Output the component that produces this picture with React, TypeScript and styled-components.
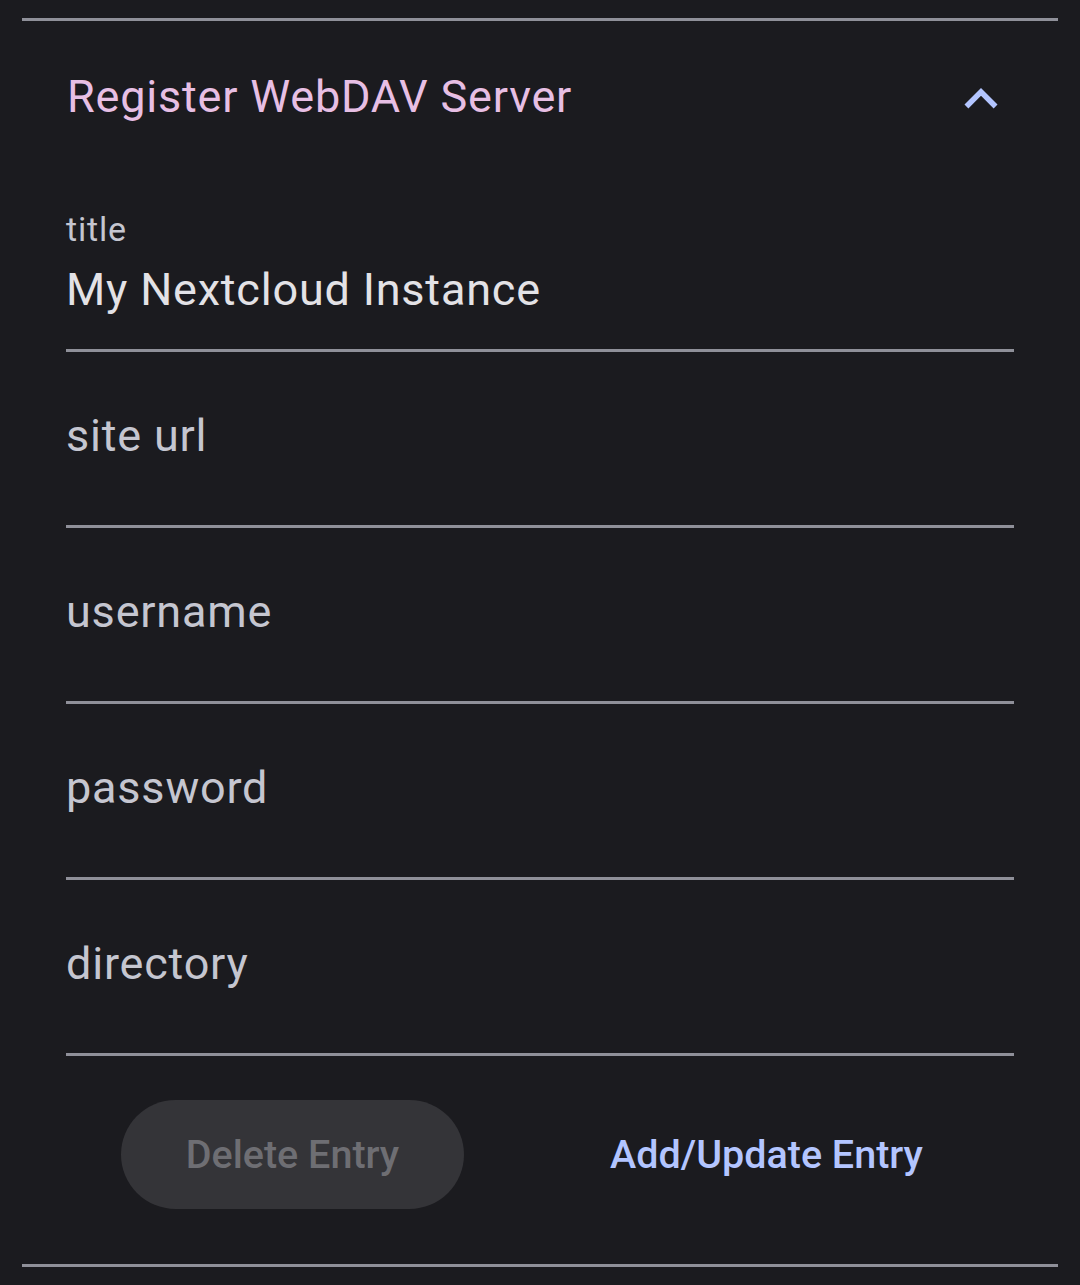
import React from "react";
import styled, { createGlobalStyle } from "styled-components";

const Global = createGlobalStyle`
  html, body {
    margin: 0;
    padding: 0;
    background: #1b1b1f;
  }
  body {
    font-family: Roboto, "Noto Sans", "Liberation Sans", sans-serif;
    -webkit-font-smoothing: antialiased;
  }
`;

const Page = styled.div`
  width: 1080px;
  min-height: 1285px;
  background: #1b1b1f;
  padding: 18px 22px 0;
  box-sizing: border-box;
`;

const Divider = styled.div`
  height: 3px;
  background: #8f9099;
`;

const Header = styled.div`
  height: 155px;
  display: flex;
  align-items: center;
  justify-content: space-between;
  padding: 0 44px 0 45px;
`;

const HeaderTitle = styled.div`
  font-size: 45px;
  font-weight: 400;
  letter-spacing: 0.8px;
  color: #e7bfe4;
  margin-top: -4px;
`;

const Chevron = styled.svg`
  width: 66px;
  height: 66px;
  display: block;
  fill: #b3c5ff;
`;

const Form = styled.div`
  padding: 0 44px;
  display: flex;
  flex-direction: column;
`;

const Field = styled.div`
  height: 173px;
  border-bottom: 3px solid #8f9099;
  display: flex;
  flex-direction: column;
  justify-content: center;
`;

const FieldLabel = styled.div`
  font-size: 34px;
  line-height: 40px;
  letter-spacing: 0.8px;
  color: #c5c6d0;
  margin-top: 1px;
`;

const FieldValue = styled.div`
  font-size: 45px;
  line-height: 54px;
  letter-spacing: 0.8px;
  color: #e3e2e6;
  margin-top: 14px;
`;

const Placeholder = styled.div`
  font-size: 45px;
  line-height: 54px;
  letter-spacing: 0.8px;
  color: #c5c6d0;
  margin-top: -5px;
`;

const ButtonRow = styled.div`
  display: flex;
  justify-content: space-around;
  align-items: center;
  padding: 44px 0 55px;
`;

const FilledButton = styled.button`
  width: 343px;
  height: 109px;
  border: none;
  border-radius: 55px;
  background: #343438;
  color: #6e6e73;
  font-family: Roboto, "Noto Sans", sans-serif;
  font-size: 39.5px;
  font-weight: 500;
  letter-spacing: 0px;
  padding: 0;
`;

const TextButton = styled.button`
  height: 109px;
  border: none;
  background: transparent;
  color: #b3c5ff;
  font-family: Roboto, "Noto Sans", sans-serif;
  font-size: 39.5px;
  font-weight: 500;
  letter-spacing: 0px;
  padding: 0 36px;
`;

const fields = ["site url", "username", "password", "directory"];

export default function App() {
  return (
    <Page>
      <Global />
      <Divider />
      <Header>
        <HeaderTitle>Register WebDAV Server</HeaderTitle>
        <Chevron viewBox="0 0 24 24">
          <path d="M12 8l-6 6 1.41 1.41L12 10.83l4.59 4.58L18 14z" />
        </Chevron>
      </Header>
      <Form>
        <Field>
          <FieldLabel>title</FieldLabel>
          <FieldValue>My Nextcloud Instance</FieldValue>
        </Field>
        {fields.map((f) => (
          <Field key={f}>
            <Placeholder>{f}</Placeholder>
          </Field>
        ))}
        <ButtonRow>
          <FilledButton disabled>Delete Entry</FilledButton>
          <TextButton>Add/Update Entry</TextButton>
        </ButtonRow>
      </Form>
      <Divider />
    </Page>
  );
}
